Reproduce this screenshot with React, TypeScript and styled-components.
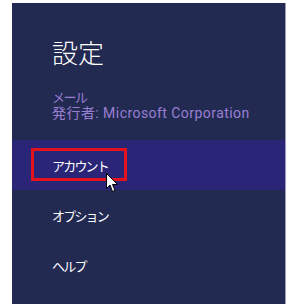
import React from 'react'
import styled, { createGlobalStyle } from 'styled-components'

const GlobalStyle = createGlobalStyle`
  html, body {
    margin: 0;
    padding: 0;
    background: #ffffff;
  }
  body {
    font-family: 'Noto Sans', 'Noto Sans CJK JP', sans-serif;
  }
`

const Page = styled.div`
  width: 297px;
  height: 308px;
  padding: 3px 0 0 12px;
  box-sizing: border-box;
`

const Panel = styled.div`
  width: 274px;
  height: 301px;
  background: #222a52;
  border-right: 1px solid #9d9ab8;
  box-sizing: border-box;
  display: flex;
  flex-flow: column nowrap;
`

const Title = styled.div`
  font-family: 'Noto Sans CJK JP', sans-serif;
  font-weight: 300;
  font-size: 26px;
  line-height: 30px;
  color: #ffffff;
  padding: 34px 0 0 40px;
`

const AppInfo = styled.div`
  font-family: Roboto, 'Noto Sans CJK JP', sans-serif;
  font-size: 14px;
  line-height: 15px;
  color: #9a7fd2;
  padding: 23px 0 0 40px;
  display: flex;
  flex-flow: column nowrap;
  gap: 1px;
`

const AppName = styled.div`
  font-family: 'Liberation Sans', 'Noto Sans CJK JP', sans-serif;
  font-size: 13px;
  letter-spacing: -1.5px;
`

const Publisher = styled.div`
  white-space: nowrap;
  letter-spacing: 0.45px;
`

const Menu = styled.div`
  margin-top: 19px;
  display: flex;
  flex-flow: column nowrap;
`

const MenuItem = styled.div<{ active?: boolean }>`
  position: relative;
  height: 50px;
  display: flex;
  align-items: center;
  padding-left: 40px;
  background: ${(p) => (p.active ? '#2b2577' : 'transparent')};
  font-family: 'Noto Sans CJK JP', sans-serif;
  font-size: 13px;
  letter-spacing: -1.8px;
  color: #ffffff;
`

const Highlight = styled.div`
  position: absolute;
  left: 19px;
  top: 8px;
  width: 96px;
  height: 33px;
  border: 3px solid #e3121c;
  box-sizing: border-box;
`

const Cursor = styled.svg`
  position: absolute;
  left: 94px;
  top: 33px;
`

const items = ['アカウント', 'オプション', 'ヘルプ']

const App = () => {
  return (
    <Page>
      <GlobalStyle />
      <Panel>
        <Title>設定</Title>
        <AppInfo>
          <AppName>メール</AppName>
          <Publisher>発行者: Microsoft Corporation</Publisher>
        </AppInfo>
        <Menu>
          {items.map((label, index) => (
            <MenuItem key={index} active={index === 0}>
              {label}
              {index === 0 && (
                <>
                  <Highlight />
                  <Cursor width="13" height="20" viewBox="0 0 13 20">
                    <path
                      d="M0.5 0.5 L0.5 15.5 L4 12 L6.5 18.5 L9 17.5 L6.5 11.5 L11.5 11.5 Z"
                      fill="#ffffff"
                      stroke="#000000"
                      strokeWidth="1"
                      strokeLinejoin="miter"
                    />
                  </Cursor>
                </>
              )}
            </MenuItem>
          ))}
        </Menu>
      </Panel>
    </Page>
  )
}

export default App
